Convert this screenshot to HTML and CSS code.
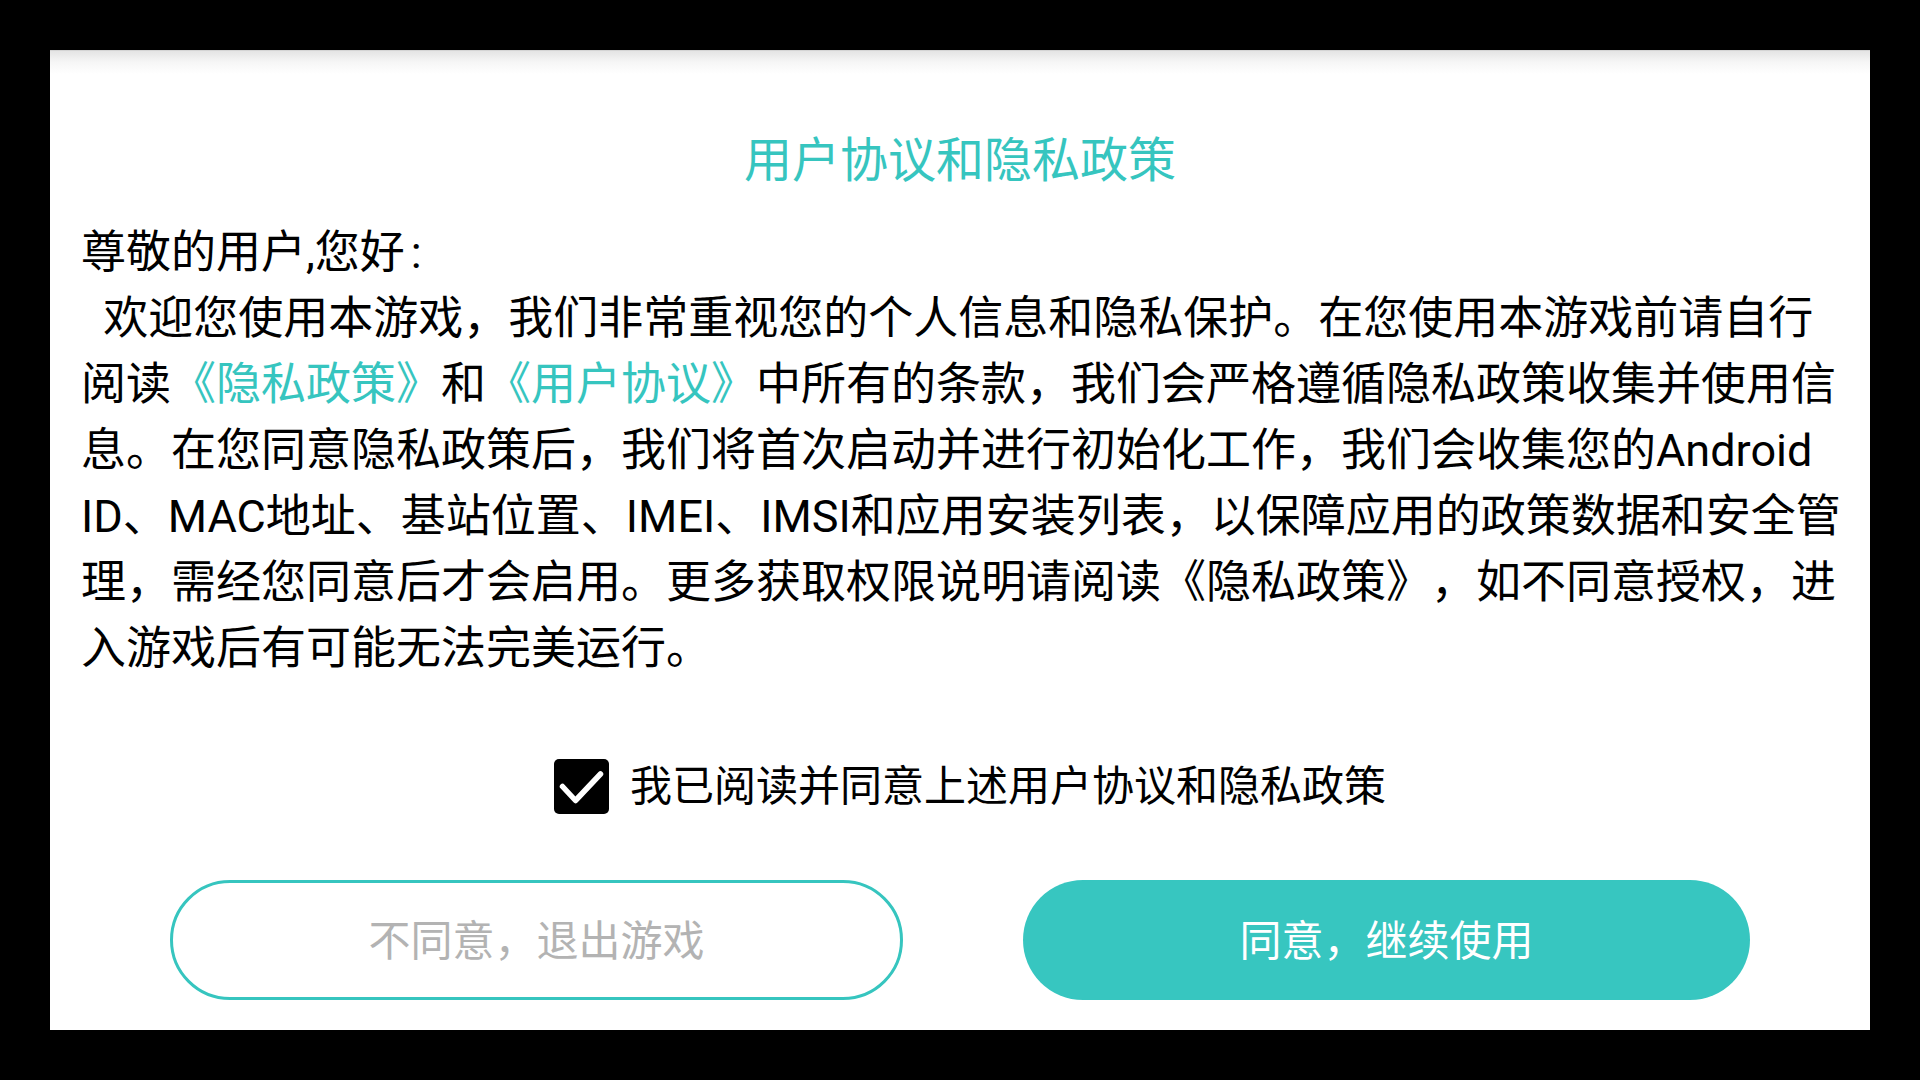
FILE: index.html
```html
<!DOCTYPE html>
<html lang="zh-CN">
<head>
<meta charset="utf-8">
<title>用户协议和隐私政策</title>
<link rel="stylesheet" href="styles.css">
</head>
<body>
<div class="panel">
  <h1 class="title">用户协议和隐私政策</h1>
  <div class="content">
    <p class="line">尊敬的用户,您好<span class="colon">:</span></p>
    <p class="line">&nbsp;&nbsp;欢迎您使用本游戏，我们非常重视您的个人信息和隐私保护。在您使用本游戏前请自行阅读<span class="link">《隐私政策》</span>和<span class="link">《用户协议》</span>中所有的条款，我们会严格遵循隐私政策收集并使用信息。在您同意隐私政策后，我们将首次启动并进行初始化工作，我们会收集您的Android ID、MAC地址、基站位置、IMEI、IMSI和应用安装列表，以保障应用的政策数据和安全管理，需经您同意后才会启用。更多获取权限说明请阅读《隐私政策》，如不同意授权，进入游戏后有可能无法完美运行。</p>
  </div>
  <div class="agree-row">
    <svg class="checkbox" width="55" height="55" viewBox="0 0 55 55">
      <rect x="0" y="0" width="55" height="55" rx="5" ry="5" fill="#000"/>
      <path d="M8.5 27.5 L21.5 41.5 L46.5 15" fill="none" stroke="#fff" stroke-width="5.5" stroke-linecap="round" stroke-linejoin="round"/>
    </svg>
    <span class="agree-text">我已阅读并同意上述用户协议和隐私政策</span>
  </div>
  <div class="buttons">
    <div class="btn btn-outline">不同意，退出游戏</div>
    <div class="btn btn-fill">同意，继续使用</div>
  </div>
</div>
</body>
</html>
```

FILE: styles.css
```css
html, body {
  margin: 0;
  padding: 0;
}
body {
  width: 1920px;
  height: 1080px;
  background: #000;
  overflow: hidden;
  font-family: "Roboto", "Noto Sans CJK SC", sans-serif;
  text-spacing-trim: space-all;
}
.panel {
  box-sizing: border-box;
  margin: 50px;
  width: 1820px;
  height: 980px;
  background-color: #fff;
  background-image: linear-gradient(#c4c4c4 0px, #e4e4e4 1px, #f6f6f6 12px, #ffffff 24px);
  background-repeat: no-repeat;
  background-size: 100% 26px;
  padding-top: 78px;
  display: flex;
  flex-direction: column;
}
.title {
  margin: 0;
  font-weight: 400;
  font-size: 48px;
  line-height: 66px;
  color: #36c5bf;
  text-align: center;
}
.content {
  margin-top: 26px;
  padding-left: 31px;
  width: 1762px;
  font-size: 45px;
  line-height: 66px;
  color: #000;
}
.line {
  margin: 0;
}
.colon {
  margin-left: 6px;
}
.link {
  color: #36c5bf;
}
.agree-row {
  margin-top: 77px;
  height: 55px;
  display: flex;
  align-items: center;
  justify-content: center;
  padding-left: 20px;
  gap: 21px;
}
.checkbox {
  display: block;
  flex: none;
}
.agree-text {
  font-size: 42px;
  line-height: 55px;
  color: #000;
}
.buttons {
  margin-top: 66px;
  padding: 0 120px;
  display: flex;
  gap: 120px;
}
.btn {
  box-sizing: border-box;
  flex: 1;
  height: 120px;
  border-radius: 60px;
  display: flex;
  align-items: center;
  justify-content: center;
  padding-bottom: 5px;
  font-size: 42px;
}
.btn-outline {
  border: 3px solid #36c5bf;
  background: #fff;
  color: #b3b3b3;
}
.btn-fill {
  background: #37c6c0;
  color: #fff;
}
```
